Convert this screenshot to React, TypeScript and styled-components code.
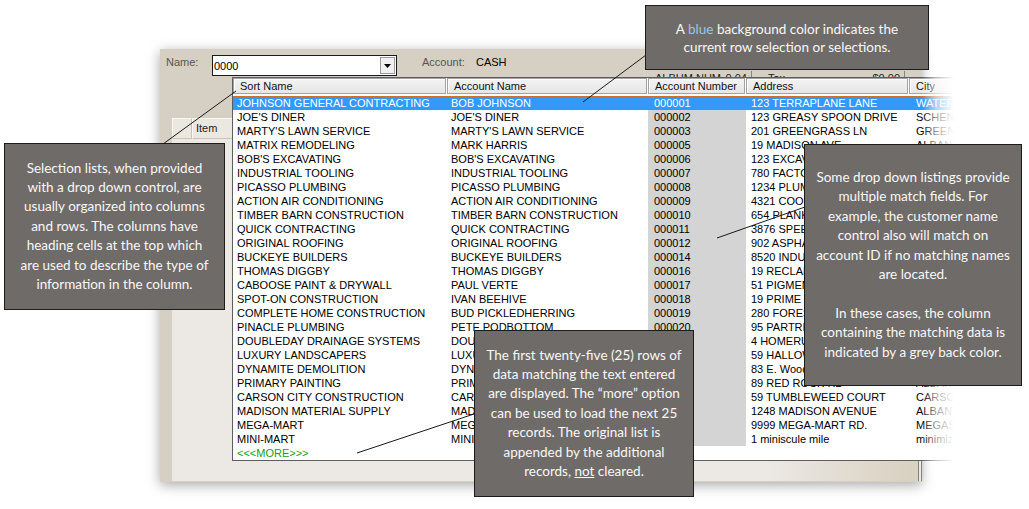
import React from "react";
import styled, { createGlobalStyle } from "styled-components";

const GlobalStyle = createGlobalStyle`
  html, body {
    margin: 0;
    padding: 0;
    background: #fff;
  }
  body {
    font-family: "Liberation Sans", Arial, sans-serif;
  }
`;

type Row = [string, string, string, string, string];

const rows: Row[] = [
  ["JOHNSON GENERAL CONTRACTING", "BOB JOHNSON", "000001", "123 TERRAPLANE LANE", "WATERFORD"],
  ["JOE'S DINER", "JOE'S DINER", "000002", "123 GREASY SPOON DRIVE", "SCHENECTADY"],
  ["MARTY'S LAWN SERVICE", "MARTY'S LAWN SERVICE", "000003", "201 GREENGRASS LN", "GREENVILLE"],
  ["MATRIX REMODELING", "MARK HARRIS", "000005", "19 MADISON AVE", "ALBANY"],
  ["BOB'S EXCAVATING", "BOB'S EXCAVATING", "000006", "123 EXCAVATION WAY", "TROY"],
  ["INDUSTRIAL TOOLING", "INDUSTRIAL TOOLING", "000007", "780 FACTORY ST", "COHOES"],
  ["PICASSO PLUMBING", "PICASSO PLUMBING", "000008", "1234 PLUMB LINE", "LATHAM"],
  ["ACTION AIR CONDITIONING", "ACTION AIR CONDITIONING", "000009", "4321 COOL BREEZE", "DELMAR"],
  ["TIMBER BARN CONSTRUCTION", "TIMBER BARN CONSTRUCTION", "000010", "654 PLANK RD", "CLIFTON PARK"],
  ["QUICK CONTRACTING", "QUICK CONTRACTING", "000011", "3876 SPEEDWAY", "SARATOGA"],
  ["ORIGINAL ROOFING", "ORIGINAL ROOFING", "000012", "902 ASPHALT AVE", "ALBANY"],
  ["BUCKEYE BUILDERS", "BUCKEYE BUILDERS", "000014", "8520 INDUSTRIAL PKWY", "COLUMBUS"],
  ["THOMAS DIGGBY", "THOMAS DIGGBY", "000016", "19 RECLAMATION RD", "TROY"],
  ["CABOOSE PAINT & DRYWALL", "PAUL VERTE", "000017", "51 PIGMENT PL", "SCHENECTADY"],
  ["SPOT-ON CONSTRUCTION", "IVAN BEEHIVE", "000018", "19 PRIME ST", "ALBANY"],
  ["COMPLETE HOME CONSTRUCTION", "BUD PICKLEDHERRING", "000019", "280 FOREST RD", "GLENVILLE"],
  ["PINACLE PLUMBING", "PETE PODBOTTOM", "000020", "95 PARTRIDGE LN", "LATHAM"],
  ["DOUBLEDAY DRAINAGE SYSTEMS", "DOUBLEDAY DRAINAGE", "000021", "4 HOMERUN WAY", "COOPERSTOWN"],
  ["LUXURY LANDSCAPERS", "LUXURY LANDSCAPERS", "000022", "59 HALLOWED GROUND", "DELMAR"],
  ["DYNAMITE DEMOLITION", "DYNAMITE DEMOLITION", "000023", "83 E. Woodland Dr", "TROY"],
  ["PRIMARY PAINTING", "PRIMARY PAINTING", "000024", "89 RED ROCK RD", "ALBANY"],
  ["CARSON CITY CONSTRUCTION", "CARSON CITY CONSTRUCTION", "000025", "59 TUMBLEWEED COURT", "CARSON CITY"],
  ["MADISON MATERIAL SUPPLY", "MADISON MATERIAL SUPPLY", "000026", "1248 MADISON AVENUE", "ALBANY"],
  ["MEGA-MART", "MEGA-MART", "000027", "9999 MEGA-MART RD.", "MEGASTORE"],
  ["MINI-MART", "MINI-MART", "000028", "1 miniscule mile", "minimize"],
];

const columns = [
  { title: "Sort Name", width: 214, pad: 4 },
  { title: "Account Name", width: 201, pad: 4 },
  { title: "Account Number", width: 98, pad: 6 },
  { title: "Address", width: 163, pad: 5 },
  { title: "City", width: 120, pad: 7 },
];

const MATCH_COL = 2;

const Stage = styled.div`
  position: relative;
  width: 1029px;
  height: 509px;
  overflow: hidden;
  background: #fff;
  padding: 49px 0 0 160px;
  box-sizing: border-box;
`;

const Window = styled.div`
  width: 762px;
  height: 433px;
  background: #d6d0c4;
  box-shadow: 0 3px 12px rgba(0, 0, 0, 0.35);
  display: flex;
  flex-direction: column;
  font-size: 11px;
  color: #000;
`;

const TopRow = styled.div`
  display: flex;
  align-items: flex-start;
  height: 37px;
  padding: 6px 0 0 6px;
  box-sizing: border-box;
`;

const Label = styled.span<{ $w: number }>`
  width: ${(p) => p.$w}px;
  line-height: 15px;
  color: #555;
  flex: none;
`;

const Value = styled.span`
  line-height: 15px;
  color: #000;
`;

const Combo = styled.div`
  width: 185px;
  height: 21px;
  box-sizing: border-box;
  border: 1px solid #1a1a1a;
  background: #fff;
  display: flex;
  align-items: center;
  justify-content: space-between;
  padding-left: 1px;
  margin-right: 25px;
  flex: none;
`;

const DropButton = styled.div`
  width: 15px;
  height: 17px;
  box-sizing: border-box;
  border: 1px solid #9a9a9a;
  background: #f0f0f0;
  display: flex;
  align-items: center;
  justify-content: center;
  margin-right: 1px;
`;

const InfoStrip = styled.div`
  margin-left: auto;
  margin-right: 17px;
  padding-top: 16px;
  display: flex;
  gap: 6px;
`;

const InfoField = styled.div<{ $w: number }>`
  width: ${(p) => p.$w}px;
  height: 16px;
  box-sizing: border-box;
  border-right: 1px solid #8c8678;
  display: flex;
  justify-content: space-between;
  padding: 0 4px 0 10px;
  line-height: 14px;
  color: #222;
`;

const Panel = styled.div`
  margin: 32px 0 1px 12px;
  width: 750px;
  flex: 1;
  box-sizing: border-box;
  background: linear-gradient(to right, #ece9e4 80%, #d9d1c1 99%);
  border-right: 4px double #85807a;
`;

const GridHeader = styled.div`
  display: flex;
  height: 21px;
`;

const GridHeadCell = styled.div<{ $w: number }>`
  width: ${(p) => p.$w}px;
  box-sizing: border-box;
  border: 1px solid #f9f8f5;
  border-right-color: #c9c3b7;
  border-bottom-color: #c9c3b7;
  background: #ebe8e2;
  padding-left: 3px;
  line-height: 19px;
  color: #222;
`;

const Dropdown = styled.div`
  position: absolute;
  left: 232px;
  top: 77px;
  width: 740px;
  height: 384px;
  box-sizing: border-box;
  border: 1px solid #5e5e5e;
  background: #fff;
  font-size: 11px;
  z-index: 2;
  overflow: hidden;
`;

const ListHead = styled.div`
  display: flex;
  height: 16px;
  margin-bottom: 2px;
  white-space: nowrap;
`;

const HeadCell = styled.div<{ $w: number }>`
  width: ${(p) => p.$w - 1}px;
  margin-right: 1px;
  box-sizing: border-box;
  border: 1px solid #a3a3a3;
  box-shadow: inset 1px 1px 0 #fff;
  background: linear-gradient(#f3f3f3, #e6e6e6);
  padding-left: 6px;
  line-height: 14px;
  color: #111;
  flex: none;
  overflow: hidden;
`;

const ListRow = styled.div<{ $selected?: boolean }>`
  display: flex;
  height: 14px;
  line-height: 14px;
  white-space: nowrap;
  background: ${(p) => (p.$selected ? "#3399ff" : "transparent")};
  color: ${(p) => (p.$selected ? "#fff" : "#000")};
  outline: ${(p) => (p.$selected ? "1px dotted #c8702c" : "none")};
  outline-offset: -1px;
`;

const Cell = styled.div<{ $w: number; $pad: number; $match?: boolean }>`
  width: ${(p) => p.$w}px;
  padding-left: ${(p) => p.$pad}px;
  box-sizing: border-box;
  flex: none;
  overflow: hidden;
  background: ${(p) => (p.$match ? "#d4d4d4" : "transparent")};
`;

const More = styled.div`
  height: 14px;
  line-height: 14px;
  padding-left: 4px;
  color: #14a014;
`;

const RightFade = styled.div`
  position: absolute;
  left: 922px;
  top: 60px;
  width: 60px;
  height: 420px;
  background: linear-gradient(to right, rgba(255, 255, 255, 0) 0px, rgba(255, 255, 255, 0.6) 14px, #fff 32px);
  z-index: 3;
`;

const Leaders = styled.svg`
  position: absolute;
  left: 0;
  top: 0;
  z-index: 4;
  pointer-events: none;
`;

const Callout = styled.div<{ $x: number; $y: number; $w: number; $h: number; $lh?: number }>`
  position: absolute;
  left: ${(p) => p.$x}px;
  top: ${(p) => p.$y}px;
  width: ${(p) => p.$w}px;
  height: ${(p) => p.$h}px;
  box-sizing: border-box;
  background: #6f6b69;
  border: 1px solid #1c1c1c;
  color: #f8f8f8;
  font-family: Lato, "Open Sans", sans-serif;
  font-size: 13.5px;
  line-height: ${(p) => p.$lh ?? 19.4}px;
  text-align: center;
  display: flex;
  flex-direction: column;
  justify-content: center;
  z-index: 5;
`;

const Blue = styled.span`
  color: #9fc3e8;
`;

const Arrow = () => (
  <svg width="7" height="4" viewBox="0 0 7 4">
    <path d="M0 0 H7 L3.5 4 Z" fill="#000" />
  </svg>
);

export default function App() {
  return (
    <>
      <GlobalStyle />
      <Stage>
        <Window>
          <TopRow>
            <Label $w={46}>Name:</Label>
            <Combo>
              <span>0000</span>
              <DropButton>
                <Arrow />
              </DropButton>
            </Combo>
            <Label $w={54}>Account:</Label>
            <Value>CASH</Value>
            <InfoStrip>
              <InfoField $w={107}>
                <span>ALBUM NUM</span>
                <span>0.04</span>
              </InfoField>
              <InfoField $w={147}>
                <span>Tax</span>
                <span>$0.00</span>
              </InfoField>
            </InfoStrip>
          </TopRow>
          <Panel>
            <GridHeader>
              <GridHeadCell $w={20} />
              <GridHeadCell $w={180}>Item</GridHeadCell>
              <GridHeadCell $w={200}>Description</GridHeadCell>
            </GridHeader>
          </Panel>
        </Window>

        <Dropdown>
          <ListHead>
            {columns.map((c) => (
              <HeadCell key={c.title} $w={c.width}>
                {c.title}
              </HeadCell>
            ))}
          </ListHead>
          {rows.map((r, i) => (
            <ListRow key={r[2]} $selected={i === 0}>
              {r.map((v, j) => (
                <Cell
                  key={j}
                  $w={columns[j].width}
                  $pad={columns[j].pad}
                  $match={i !== 0 && j === MATCH_COL}
                >
                  {v}
                </Cell>
              ))}
            </ListRow>
          ))}
          <More>&lt;&lt;&lt;MORE&gt;&gt;&gt;</More>
        </Dropdown>

        <RightFade />

        <Leaders width="1029" height="509">
          <g stroke="#1a1a1a" strokeWidth="1">
            <line x1="163" y1="144" x2="236" y2="91" />
            <line x1="583" y1="102" x2="646" y2="55" />
            <line x1="717" y1="238" x2="805" y2="207" />
            <line x1="357" y1="453" x2="474" y2="414" />
          </g>
        </Leaders>

        <Callout $x={4} $y={143} $w={221} $h={167}>
          <div>
            Selection lists, when provided
            <br />
            with a drop down control, are
            <br />
            usually organized into columns
            <br />
            and rows. The columns have
            <br />
            heading cells at the top which
            <br />
            are used to describe the type of
            <br />
            information in the column.
          </div>
        </Callout>

        <Callout $x={645} $y={5} $w={284} $h={65} $lh={18}>
          <div>
            A <Blue>blue</Blue> background color indicates the
            <br />
            current row selection or selections.
          </div>
        </Callout>

        <Callout $x={804} $y={144} $w={218} $h={242}>
          <div>
            Some drop down listings provide
            <br />
            multiple match fields. For
            <br />
            example, the customer name
            <br />
            control also will match on
            <br />
            account ID if no matching names
            <br />
            are located.
            <br />
            <br />
            In these cases, the column
            <br />
            containing the matching data is
            <br />
            indicated by a grey back color.
          </div>
        </Callout>

        <Callout $x={474} $y={330} $w={220} $h={167}>
          <div>
            The first twenty-five (25) rows of
            <br />
            data matching the text entered
            <br />
            are displayed. The “more” option
            <br />
            can be used to load the next 25
            <br />
            records. The original list is
            <br />
            appended by the additional
            <br />
            records, <u>not</u> cleared.
          </div>
        </Callout>
      </Stage>
    </>
  );
}
